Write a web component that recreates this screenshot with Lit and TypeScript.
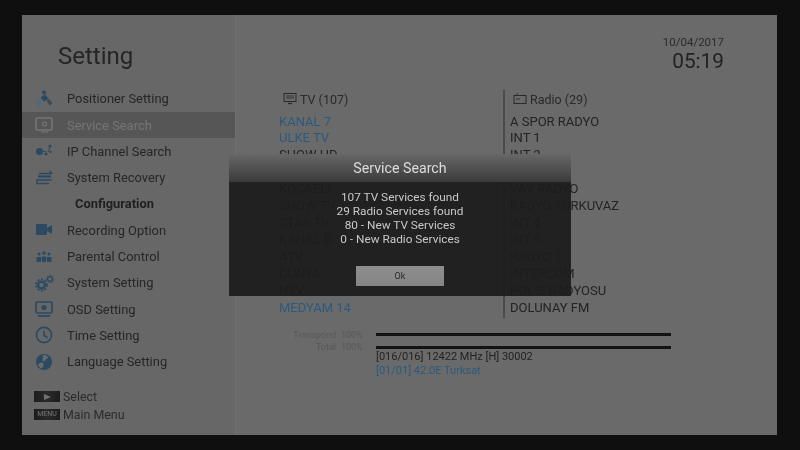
import { LitElement, html, css, svg } from "lit";
import { customElement } from "lit/decorators.js";

const icons: Record<string, unknown> = {
  sat: svg`<path d="M7.5 2.5l3-1.5 2 3.5-3 1.5z" fill="currentColor"/><path d="M6.5 8.5l4.5-3 3.5 4-4.5 3z" fill="currentColor"/><path d="M12.5 11.5l3-1.5 3 4.5-3 2z" fill="#3f4a52"/><path d="M1.5 14.5l4-3 3 3-4.5 3z" fill="#4d6a7c"/>`,
  search: svg`<rect x="2" y="3" width="16" height="12" rx="1" fill="none" stroke="currentColor" stroke-width="1.6"/><path d="M7 17h7" stroke="currentColor" stroke-width="1.2"/><circle cx="10.5" cy="9" r="2" fill="none" stroke="currentColor" stroke-width="1.2"/>`,
  ip: svg`<circle cx="5.5" cy="10.5" r="3.6" fill="currentColor"/><circle cx="16" cy="5" r="1.5" fill="currentColor"/><circle cx="12" cy="13" r="1.6" fill="currentColor"/><circle cx="16.5" cy="11" r="1.2" fill="currentColor"/><path d="M9 10.5h3M14 11l2-5" stroke="currentColor" stroke-width="1"/>`,
  recover: svg`<path d="M5 5.5h13M18 5.5l-2.5-2.5" fill="none" stroke="currentColor" stroke-width="1.4"/><path d="M4 8.5h13" stroke="currentColor" stroke-width="2.2"/><path d="M17.5 12H3v3.5h12" fill="none" stroke="currentColor" stroke-width="1.4"/>`,
  cam: svg`<rect x="2" y="4" width="11" height="11" rx="1" fill="currentColor"/><path d="M13 8l5-3v9l-5-3z" fill="currentColor"/>`,
  people: svg`<g fill="currentColor"><circle cx="5" cy="7" r="1.5"/><circle cx="10" cy="6" r="1.8"/><circle cx="15" cy="7" r="1.5"/><rect x="2.5" y="10" width="4.5" height="5" rx="1"/><rect x="7.8" y="9.5" width="4.5" height="5.5" rx="1"/><rect x="13" y="10" width="4.5" height="5" rx="1"/></g>`,
  gear: svg`<circle cx="7.5" cy="12" r="3.4" fill="none" stroke="currentColor" stroke-width="2.4"/><circle cx="7.5" cy="12" r="5.6" fill="none" stroke="currentColor" stroke-width="1.6" stroke-dasharray="2 1.6"/><circle cx="16" cy="6" r="2.4" fill="none" stroke="currentColor" stroke-width="1.3"/><circle cx="16" cy="6" r="3.8" fill="none" stroke="currentColor" stroke-width="1" stroke-dasharray="1.5 1.3"/>`,
  osd: svg`<rect x="2" y="3" width="16" height="11" rx="1" fill="none" stroke="currentColor" stroke-width="1.6"/><circle cx="10" cy="8.5" r="2.6" fill="currentColor"/><path d="M4 17h12" stroke="currentColor" stroke-width="1.8"/>`,
  clock: svg`<circle cx="10" cy="10" r="7.6" fill="none" stroke="currentColor" stroke-width="1.6"/><path d="M10 5.5V10.5l3.5 2" fill="none" stroke="currentColor" stroke-width="1.5"/>`,
  globe: svg`<circle cx="10" cy="10" r="8" fill="currentColor"/><path d="M9 3c3-.5 5 1 5.5 3l-2.5 1-1.5 2.5-2-1zM4 13c1-2 3-3 5-2 1 1 1 3-.5 4.5l-2 1z" fill="#6a6a6a"/>`,
};

const tvIcon = svg`<rect x="1" y="1.5" width="12" height="8" fill="none" stroke="currentColor" stroke-width="1"/><path d="M3 4h8M3 6h8" stroke="currentColor" stroke-width=".8"/><path d="M5 11.5h4" stroke="currentColor" stroke-width="1.3"/>`;
const radioIcon = svg`<rect x="1" y="3.5" width="12" height="8" fill="none" stroke="currentColor" stroke-width="1"/><path d="M3 3.5L5 1M3 7h4" stroke="currentColor" stroke-width=".9"/>`;

const menu = [
  ["sat", "Positioner Setting"],
  ["search", "Service Search"],
  ["ip", "IP Channel Search"],
  ["recover", "System Recovery"],
  ["", "Configuration"],
  ["cam", "Recording Option"],
  ["people", "Parental Control"],
  ["gear", "System Setting"],
  ["osd", "OSD Setting"],
  ["clock", "Time Setting"],
  ["globe", "Language Setting"],
];

const tv = [
  ["KANAL 7", 1], ["ULKE TV", 1], ["SHOW HD", 0], ["TV 8", 0], ["KOCAELI", 0], ["SHOW TV", 0],
  ["STAR TV", 0], ["KANAL D", 0], ["ATV", 0], ["DUNYA", 0], ["NTV", 0], ["MEDYAM 14", 1],
];
const radio = [
  "A SPOR RADYO", "INT 1", "INT 2", "INT 3", "VAV RADYO", "RADYO TURKUVAZ",
  "INT 4", "INT 5", "RADYO 7", "INTERCOM", "POLIS RADYOSU", "DOLUNAY FM",
];

@customElement("app-root")
export class AppRoot extends LitElement {
  static styles = css`
    :host { display: block; width: 800px; height: 450px; overflow: hidden; background: #0f0f0f; font-family: Roboto, "Liberation Sans", sans-serif; color: #232323; }
    .screen { position: relative; width: 800px; height: 450px; box-sizing: border-box; padding: 15px 23px 15px 22px; filter: blur(0.45px); }
    .panel { display: flex; height: 420px; background: #6a6a6a; }
    .side { width: 214px; background: #676767; border-right: 1px solid #707070; flex: none; padding-top: 26px; box-sizing: border-box; }
    .title { font-size: 24px; line-height: 30px; padding-left: 36px; margin-bottom: 14.6px; color: #252525; }
    .row { display: flex; align-items: center; height: 26.3px; font-size: 12.9px; color: #262626; }
    .ic { width: 20px; height: 20px; margin: 0 13px 0 12px; color: #2a4a62; flex: none; }
    .row.sel { background: #565656; color: #757575; }
    .row.sel .ic { color: #757575; }
    .row.head { font-weight: 700; justify-content: center; padding-right: 28px; color: #202020; }
    .foot { margin-top: 13px; padding-left: 12px; font-size: 12.4px; color: #2b2b2b; }
    .fr { display: flex; align-items: center; height: 18px; gap: 3px; }
    .key { width: 26px; height: 11px; background: linear-gradient(90deg, #1c1c1c, #2a2a2a 50%, #1c1c1c); color: #777; font-size: 7px; line-height: 11px; text-align: center; display: flex; align-items: center; justify-content: center; }
    .tri { width: 0; height: 0; border-left: 7px solid #707070; border-top: 3.5px solid transparent; border-bottom: 3.5px solid transparent; }
    .main { flex: 1; display: flex; flex-direction: column; padding: 19px 53px 0 43px; min-width: 0; }
    .clock { align-self: flex-end; text-align: right; height: 39px; }
    .date { font-size: 11.5px; line-height: 16px; color: #2b2b2b; }
    .time { font-size: 20.8px; line-height: 24px; color: #222; margin-top: -1px; }
    .lists { display: flex; margin-top: 17px; height: 228px; }
    .col { flex: none; }
    .col.tv { width: 224px; }
    .col.radio { border-left: 2px solid #4a4a4a; padding-left: 5px; width: 180px; height: 228px; }
    .lh { display: flex; align-items: center; gap: 3px; height: 18px; margin-bottom: 5.5px; padding-left: 4px; font-size: 12.5px; color: #2a2a2a; }
    .col.radio .lh { padding-left: 3px; }
    .lh svg { width: 14px; height: 14px; color: #2a2a2a; }
    .ch { font-size: 13px; line-height: 16.95px; white-space: nowrap; color: #232323; }
    .ch.blue { color: #2a5a80; }
    .prog { margin-top: 14px; display: flex; flex-direction: column; gap: 7.5px; width: 392px; }
    .pr { display: flex; align-items: center; height: 5px; font-size: 9px; color: #585858; }
    .lab { width: 57px; text-align: right; margin-right: 5px; white-space: nowrap; }
    .pct { width: 21px; margin-right: 14px; }
    .bar { width: 295px; height: 3px; background: #131313; }
    .infos { margin-top: -7.5px; }
    .info { margin-left: 97px; font-size: 11px; line-height: 14px; white-space: nowrap; color: #222; }
    .info.b { color: #2a5a80; }
    .modal { position: absolute; left: 229px; top: 154px; width: 342px; height: 142px; background: rgba(28, 28, 28, 0.93); display: flex; flex-direction: column; align-items: center; color: #c8c8c8; }
    .mh { align-self: stretch; height: 28px; background: linear-gradient(#676767, #3b3b3b); text-align: center; font-size: 14.2px; line-height: 28px; color: #dcdcdc; }
    .ml { margin-top: 8px; font-size: 11.8px; line-height: 14px; text-align: center; }
    .btn { margin-top: 20px; width: 88px; height: 20px; background: linear-gradient(#8e8e8e, #858585); color: #2a2a2a; font-size: 9px; line-height: 20px; text-align: center; }
  `;

  render() {
    return html`<div class="screen">
      <div class="panel">
        <div class="side">
          <div class="title">Setting</div>
          ${menu.map(([ic, label]) =>
            ic
              ? html`<div class="row ${label === "Service Search" ? "sel" : ""}">
                  <svg class="ic" viewBox="0 0 20 20">${icons[ic]}</svg><span>${label}</span>
                </div>`
              : html`<div class="row head">${label}</div>`
          )}
          <div class="foot">
            <div class="fr"><span class="key"><span class="tri"></span></span><span>Select</span></div>
            <div class="fr"><span class="key">MENU</span><span>Main Menu</span></div>
          </div>
        </div>
        <div class="main">
          <div class="clock">
            <div class="date">10/04/2017</div>
            <div class="time">05:19</div>
          </div>
          <div class="lists">
            <div class="col tv">
              <div class="lh"><svg viewBox="0 0 14 14">${tvIcon}</svg>TV (107)</div>
              ${tv.map(([n, b]) => html`<div class="ch ${b ? "blue" : ""}">${n}</div>`)}
            </div>
            <div class="col radio">
              <div class="lh"><svg viewBox="0 0 14 14">${radioIcon}</svg>Radio (29)</div>
              ${radio.map((n) => html`<div class="ch">${n}</div>`)}
            </div>
          </div>
          <div class="prog">
            <div class="pr"><span class="lab">Transpond</span><span class="pct">100%</span><span class="bar"></span></div>
            <div class="pr"><span class="lab">Total</span><span class="pct">100%</span><span class="bar"></span></div>
            <div class="infos">
              <div class="info">[016/016] 12422 MHz [H] 30002</div>
              <div class="info b">[01/01] 42.0E Turksat</div>
            </div>
          </div>
        </div>
      </div>
      <div class="modal">
        <div class="mh">Service Search</div>
        <div class="ml">107 TV Services found<br />29 Radio Services found<br />80 - New TV Services<br />0 - New Radio Services</div>
        <div class="btn">Ok</div>
      </div>
    </div>`;
  }
}
